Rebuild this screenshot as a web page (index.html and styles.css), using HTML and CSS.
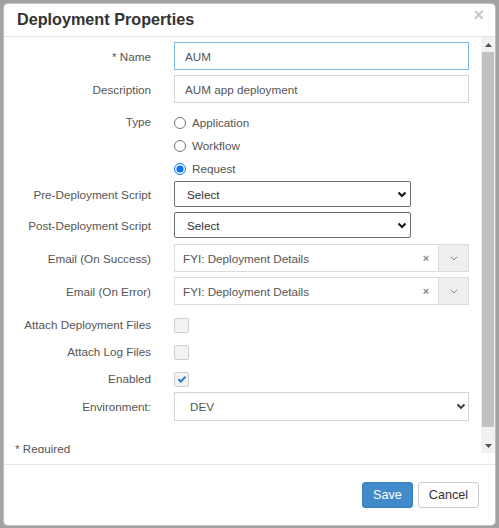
FILE: index.html
```html
<!DOCTYPE html>
<html>
<head>
<meta charset="utf-8">
<title>Deployment Properties</title>
<link rel="stylesheet" href="styles.css">
</head>
<body>
<div class="modal">
  <div class="modal-header">
    <h4 class="modal-title">Deployment Properties</h4>
    <span class="close">&times;</span>
  </div>
  <div class="modal-body">
    <div class="scroll">
      <form class="form">
        <div class="row row-name">
          <label class="lbl">* Name</label>
          <div class="ctl"><input class="input input-focus" type="text" value="AUM"></div>
        </div>
        <div class="row row-desc">
          <label class="lbl">Description</label>
          <div class="ctl"><input class="input" type="text" value="AUM app deployment"></div>
        </div>
        <div class="row row-type">
          <label class="lbl lbl-top">Type</label>
          <div class="ctl radios">
            <label class="radio"><input type="radio" name="type"><span>Application</span></label>
            <label class="radio"><input type="radio" name="type"><span>Workflow</span></label>
            <label class="radio"><input type="radio" name="type" checked><span>Request</span></label>
          </div>
        </div>
        <div class="row row-pre">
          <label class="lbl">Pre-Deployment Script</label>
          <div class="ctl">
            <div class="select-wrap native">
              <select class="select"><option>Select</option></select>
              <svg class="chev" width="10" height="7" viewBox="0 0 10 7"><path d="M1.5 1.5 L5 5 L8.5 1.5" fill="none" stroke="#111" stroke-width="2"/></svg>
            </div>
          </div>
        </div>
        <div class="row row-post">
          <label class="lbl">Post-Deployment Script</label>
          <div class="ctl">
            <div class="select-wrap native">
              <select class="select"><option>Select</option></select>
              <svg class="chev" width="10" height="7" viewBox="0 0 10 7"><path d="M1.5 1.5 L5 5 L8.5 1.5" fill="none" stroke="#111" stroke-width="2"/></svg>
            </div>
          </div>
        </div>
        <div class="row row-email1">
          <label class="lbl">Email (On Success)</label>
          <div class="ctl">
            <div class="combo">
              <span class="combo-text">FYI: Deployment Details</span>
              <span class="combo-clear">&times;</span>
              <span class="combo-arrow"><svg width="8" height="5" viewBox="0 0 8 5"><path d="M0.8 0.8 L4 4 L7.2 0.8" fill="none" stroke="#888" stroke-width="1"/></svg></span>
            </div>
          </div>
        </div>
        <div class="row row-email2">
          <label class="lbl">Email (On Error)</label>
          <div class="ctl">
            <div class="combo">
              <span class="combo-text">FYI: Deployment Details</span>
              <span class="combo-clear">&times;</span>
              <span class="combo-arrow"><svg width="8" height="5" viewBox="0 0 8 5"><path d="M0.8 0.8 L4 4 L7.2 0.8" fill="none" stroke="#888" stroke-width="1"/></svg></span>
            </div>
          </div>
        </div>
        <div class="row row-check">
          <label class="lbl">Attach Deployment Files</label>
          <div class="ctl"><span class="cbox"></span></div>
        </div>
        <div class="row row-check">
          <label class="lbl">Attach Log Files</label>
          <div class="ctl"><span class="cbox"></span></div>
        </div>
        <div class="row row-check">
          <label class="lbl">Enabled</label>
          <div class="ctl"><span class="cbox"><svg width="12" height="12" viewBox="0 0 12 12"><path d="M2.4 6.3 L4.9 8.5 L9.6 3.6" fill="none" stroke="#2a78d6" stroke-width="2"/></svg></span></div>
        </div>
        <div class="row row-env">
          <label class="lbl">Environment:</label>
          <div class="ctl">
            <div class="select-wrap">
              <select class="select select-env"><option>DEV</option></select>
              <svg class="chev chev-env" width="10" height="7" viewBox="0 0 10 7"><path d="M1.5 1.5 L5 5 L8.5 1.5" fill="none" stroke="#333" stroke-width="1.8"/></svg>
            </div>
          </div>
        </div>
        <p class="required">* Required</p>
      </form>
      <div class="scrollbar">
        <div class="sb-btn"><svg width="7" height="4" viewBox="0 0 7 4"><path d="M0 4 L3.5 0 L7 4 Z" fill="#505050"/></svg></div>
        <div class="sb-track"><div class="sb-thumb"></div></div>
        <div class="sb-btn"><svg width="7" height="4" viewBox="0 0 7 4"><path d="M0 0 L3.5 4 L7 0 Z" fill="#505050"/></svg></div>
      </div>
    </div>
  </div>
  <div class="modal-footer">
    <button class="btn btn-primary" type="button">Save</button>
    <button class="btn btn-default" type="button">Cancel</button>
  </div>
</div>
</body>
</html>
```
FILE: styles.css
```css
* { box-sizing: border-box; }
html, body { margin: 0; height: 100%; }
body {
  background: #a2a2a2;
  padding: 3px;
  font-family: "Liberation Sans", Arial, sans-serif;
  font-size: 11.7px;
  color: #555;
}
.modal {
  width: 493px;
  height: 523px;
  background: #fff;
  border: 1px solid rgba(0,0,0,0.25);
  border-radius: 5px;
  display: flex;
  flex-direction: column;
  overflow: hidden;
}
.modal-header {
  height: 33px;
  border-bottom: 1px solid #e5e5e5;
  display: flex;
  justify-content: space-between;
  align-items: flex-start;
  padding: 0 11px 0 13px;
  flex: none;
}
.modal-title {
  margin: 0;
  font-size: 16.2px;
  font-weight: bold;
  color: #333;
  line-height: 30px;
}
.close {
  font-size: 18px;
  font-weight: bold;
  color: #c8c8c8;
  line-height: 20px;
  margin-top: 1px;
}
.modal-body {
  flex: none;
  padding-bottom: 11px;
}
.scroll {
  height: 416px;
  display: flex;
  overflow: hidden;
}
.form {
  flex: 1;
  padding: 5px 0 9px 11px;
  margin: 0;
  overflow: hidden;
}
.scrollbar {
  width: 14px;
  flex: none;
  background: #f1f1f1;
  display: flex;
  flex-direction: column;
}
.sb-btn {
  height: 15px;
  flex: none;
  display: flex;
  align-items: center;
  justify-content: center;
}
.sb-track {
  flex: 1;
}
.sb-thumb {
  height: 375px;
  margin: 0 1px;
  background: #c1c1c1;
}
.row {
  display: flex;
  align-items: center;
}
.lbl {
  width: 136px;
  margin-right: 23px;
  text-align: right;
  color: #555;
  flex: none;
}
.ctl {
  width: 295px;
  flex: none;
}
.row-name { height: 28px; margin-bottom: 5px; }
.row-desc { height: 28px; margin-bottom: 8px; }
.row-type { align-items: flex-start; margin-bottom: 1px; }
.lbl-top { line-height: 22px; }
.row-pre { height: 26px; margin-bottom: 5px; }
.row-post { height: 26px; margin-bottom: 6px; }
.row-email1 { height: 28px; margin-bottom: 5px; }
.row-email2 { height: 28px; margin-bottom: 6px; }
.row-check { height: 27px; }
.row-env { height: 28px; }

.input {
  width: 100%;
  height: 28px;
  border: 1px solid #d4d4d4;
  padding: 0 10px;
  font: inherit;
  color: #555;
  background: #fff;
  outline: none;
  border-radius: 0;
}
.input-focus { border-color: #7bb7e8; }

.radios { display: flex; flex-direction: column; }
.radio {
  height: 23px;
  display: flex;
  align-items: center;
  color: #555;
}
.radio input {
  width: 12px;
  height: 12px;
  margin: 1px 6px 0 0;
  accent-color: #0a74f0;
}

.select-wrap { position: relative; width: 100%; }
.select-wrap.native { width: 237px; }
.select {
  appearance: none;
  -webkit-appearance: none;
  width: 100%;
  height: 26px;
  border: 1px solid #6f6f6f;
  border-radius: 2px;
  background: #fff;
  padding: 0 0 0 12px;
  font: inherit;
  color: #333;
  outline: none;
}
.chev {
  position: absolute;
  right: 4px;
  top: 10px;
  pointer-events: none;
}
.select-env {
  height: 29px;
  border-color: #d4d4d4;
  border-radius: 0;
  padding-left: 15px;
  color: #555;
}
.chev-env { right: 3px; top: 11px; }

.combo {
  display: flex;
  align-items: center;
  height: 28px;
  border: 1px solid #dcdcdc;
  background: #fff;
}
.combo-text {
  flex: 1;
  padding-left: 8px;
  color: #555;
}
.combo-clear {
  width: 12px;
  text-align: center;
  font-size: 11px;
  font-weight: bold;
  color: #888;
  margin-right: 6px;
}
.combo-arrow {
  width: 30px;
  height: 100%;
  background: #eee;
  border-left: 1px solid #dcdcdc;
  display: flex;
  align-items: center;
  justify-content: center;
}

.cbox {
  display: flex;
  align-items: center;
  justify-content: center;
  width: 15px;
  height: 15px;
  border: 1px solid #cfcfcf;
  border-radius: 2px;
  background: #f3f3f3;
  margin-top: 1px;
}

.required {
  margin: 21px 0 0 0;
  line-height: 16px;
  color: #555;
}

.modal-footer {
  flex: none;
  border-top: 1px solid #e5e5e5;
  padding: 17px 16px 0 0;
  display: flex;
  justify-content: flex-end;
  gap: 5px;
}
.btn {
  height: 26px;
  padding: 0 10px;
  font-family: "Liberation Sans", Arial, sans-serif;
  font-size: 12.6px;
  border-radius: 3px;
  border: 1px solid #ccc;
  cursor: pointer;
}
.btn-primary {
  background: #428bca;
  border-color: #3a81bf;
  color: #fff;
}
.btn-default {
  background: #fff;
  color: #333;
}
```
